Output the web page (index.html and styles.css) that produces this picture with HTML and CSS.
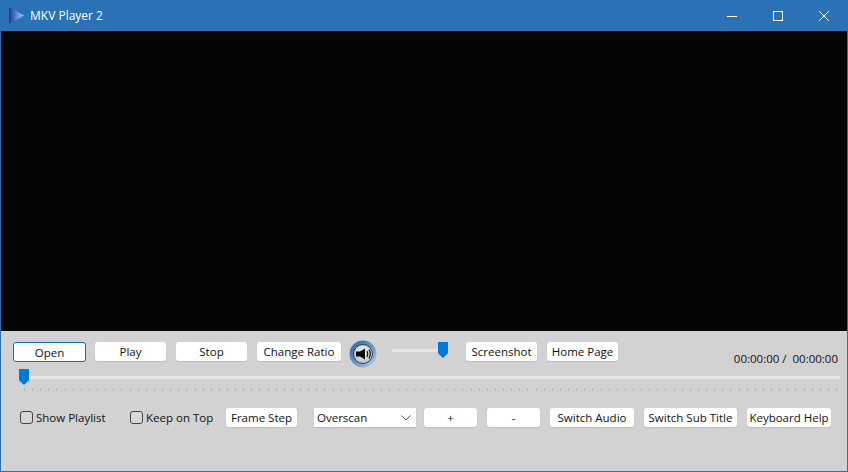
FILE: index.html
```html
<!DOCTYPE html>
<html lang="en">
<head>
    <meta charset="UTF-8">
    <title>MKV Player 2</title>
    <link rel="stylesheet" href="styles.css">
</head>
<body>
    <div class="window">
        <div class="titlebar">
            <svg class="app-icon" width="16" height="16" viewBox="0 0 16 16">
                <defs>
                    <linearGradient id="appFade" x1="0" y1="0" x2="1" y2="0">
                        <stop offset="0" stop-color="#12389f"/>
                        <stop offset="0.45" stop-color="#4f86cc"/>
                        <stop offset="1" stop-color="#a9c8e8"/>
                    </linearGradient>
                </defs>
                <polygon points="0,0 2,0 15,7.5 2,15 0,15" fill="url(#appFade)"/>
            </svg>
            <span class="title">MKV Player 2</span>
            <div class="win-controls">
                <span class="win-btn">
                    <svg width="10" height="10" viewBox="0 0 10 10"><path d="M0 5.5H10" stroke="#fff" fill="none"/></svg>
                </span>
                <span class="win-btn">
                    <svg width="10" height="10" viewBox="0 0 10 10"><rect x="0.5" y="0.5" width="9" height="9" stroke="#fff" fill="none"/></svg>
                </span>
                <span class="win-btn">
                    <svg width="10" height="10" viewBox="0 0 10 10"><path d="M0 0L10 10M10 0L0 10" stroke="#fff" fill="none"/></svg>
                </span>
            </div>
        </div>

        <div class="video"></div>

        <div class="panel">
            <div class="row row-top">
                <button class="btn btn-open">Open</button>
                <button class="btn btn-std">Play</button>
                <button class="btn btn-std">Stop</button>
                <button class="btn btn-ratio">Change Ratio</button>
                <svg class="volume-icon" width="28" height="28" viewBox="0 0 28 28">
                    <defs>
                        <linearGradient id="ringFade" x1="0" y1="0" x2="1" y2="1">
                            <stop offset="0" stop-color="#2f5f96"/>
                            <stop offset="0.55" stop-color="#6f98c4"/>
                            <stop offset="1" stop-color="#c3d6e8"/>
                        </linearGradient>
                        <radialGradient id="faceFade" cx="0.5" cy="0.4" r="0.65">
                            <stop offset="0" stop-color="#f4f4f4"/>
                            <stop offset="1" stop-color="#b9bec4"/>
                        </radialGradient>
                    </defs>
                    <circle cx="14" cy="14" r="13.5" fill="url(#ringFade)"/>
                    <circle cx="14" cy="14" r="9.5" fill="url(#faceFade)" stroke="#1f3e63"/>
                    <path d="M7 11.5H11L16 8.5V19.5L11 16.5H7Z" fill="#0a0a0a"/>
                    <path d="M18 11Q19.5 14 18 17M20 9.5Q22.5 14 20 18.5" stroke="#0a0a0a" stroke-width="1.2" fill="none"/>
                </svg>
                <div class="slider slider-volume">
                    <span class="thumb thumb-end"></span>
                </div>
                <button class="btn btn-std btn-shot">Screenshot</button>
                <button class="btn btn-std">Home Page</button>
                <span class="time">00:00:00 / &nbsp;00:00:00</span>
            </div>

            <div class="seek">
                <div class="slider slider-seek">
                    <span class="thumb"></span>
                </div>
                <div class="ticks"></div>
            </div>

            <div class="row row-bottom">
                <label class="check check-playlist"><input type="checkbox">Show Playlist</label>
                <label class="check check-top"><input type="checkbox">Keep on Top</label>
                <button class="btn btn-std">Frame Step</button>
                <div class="combo">
                    <span>Overscan</span>
                    <svg width="10" height="6" viewBox="0 0 10 6"><path d="M0.5 0.5L5 5L9.5 0.5" stroke="#555" fill="none"/></svg>
                </div>
                <button class="btn btn-small">+</button>
                <button class="btn btn-small">-</button>
                <button class="btn btn-ratio">Switch Audio</button>
                <button class="btn btn-sub">Switch Sub Title</button>
                <button class="btn btn-ratio">Keyboard Help</button>
            </div>
        </div>
    </div>
</body>
</html>
```

FILE: styles.css
```css
* {
    box-sizing: border-box;
}

html, body {
    margin: 0;
    padding: 0;
}

body {
    font-family: "Open Sans", "Noto Sans", sans-serif;
    font-size: 11.5px;
    color: #111;
}

.window {
    width: 848px;
    height: 472px;
    display: flex;
    flex-direction: column;
    border: 1px solid #2b71b5;
    border-top: 0;
    background-color: #d2d2d2;
}

.titlebar {
    height: 31px;
    margin: 0 -1px;
    display: flex;
    align-items: center;
    background-color: #2b71b5;
    color: #fff;
}

.app-icon {
    margin-left: 9px;
}

.title {
    margin-left: 5px;
    font-size: 12px;
}

.win-controls {
    margin-left: auto;
    margin-right: 1px;
    display: flex;
}

.win-btn {
    width: 46px;
    height: 31px;
    display: flex;
    align-items: center;
    justify-content: center;
}

.video {
    height: 300px;
    background-color: #050505;
}

.panel {
    flex: 1;
    padding: 9px 7px 0 12px;
}

.row {
    display: flex;
    align-items: flex-start;
}

.row-top {
    height: 29px;
    gap: 10px;
}

.row-top .btn {
    margin-top: 2px;
}

.btn {
    height: 19px;
    padding: 0;
    border: 0;
    border-radius: 3px;
    background-color: #fff;
    box-shadow: 0 1px 1px #bcbcbc;
    font-family: inherit;
    font-size: 11.5px;
    color: #111;
}

.btn-open {
    width: 73px;
    height: 20px;
    margin-right: -1px;
    border: 1px solid #0f6cbd;
    box-shadow: none;
}

.btn-std {
    width: 71px;
}

.btn-ratio {
    width: 84px;
}

.btn-sub {
    width: 93px;
}

.btn-small {
    width: 53px;
}

.volume-icon {
    margin-left: -2px;
}

.slider {
    position: relative;
    height: 3px;
    background-color: #e4e6e4;
}

.slider-volume {
    width: 56px;
    margin: 9px 8px 0 5px;
}

.slider-seek {
    margin: 7px 0 0 0;
}

.thumb {
    position: absolute;
    left: 0;
    top: -7px;
    width: 10px;
    height: 16px;
    background-color: #0078d7;
    clip-path: polygon(0 0, 100% 0, 100% 70%, 50% 100%, 0 70%);
}

.thumb-end {
    left: auto;
    right: 0;
    top: -7px;
}

.time {
    margin-left: auto;
    margin-right: 2px;
    margin-top: 11px;
    white-space: nowrap;
    font-size: 11.5px;
}

.seek {
    height: 32px;
    margin-left: 6px;
}

.ticks {
    height: 3px;
    margin: 9px 3px 0 5px;
    background-image: repeating-linear-gradient(to right, #b4b4b4 0, #b4b4b4 1px, transparent 1px, transparent 8.12px);
}

.row-bottom {
    gap: 10px;
}

.check {
    display: flex;
    align-items: center;
    height: 19px;
    white-space: nowrap;
}

.check input {
    appearance: none;
    width: 13px;
    height: 13px;
    margin: 0 3px 0 0;
    border: 1px solid #444;
    border-radius: 3px;
    background-color: #d8d8d8;
}

.check-playlist {
    width: 100px;
    margin-left: 7px;
}

.check-top {
    width: 86px;
}

.combo {
    width: 102px;
    height: 19px;
    margin-left: 7px;
    margin-right: -2px;
    padding: 0 5px 0 3px;
    display: flex;
    align-items: center;
    justify-content: space-between;
    background-color: #fff;
    box-shadow: 0 1px 1px #bcbcbc;
}
```
